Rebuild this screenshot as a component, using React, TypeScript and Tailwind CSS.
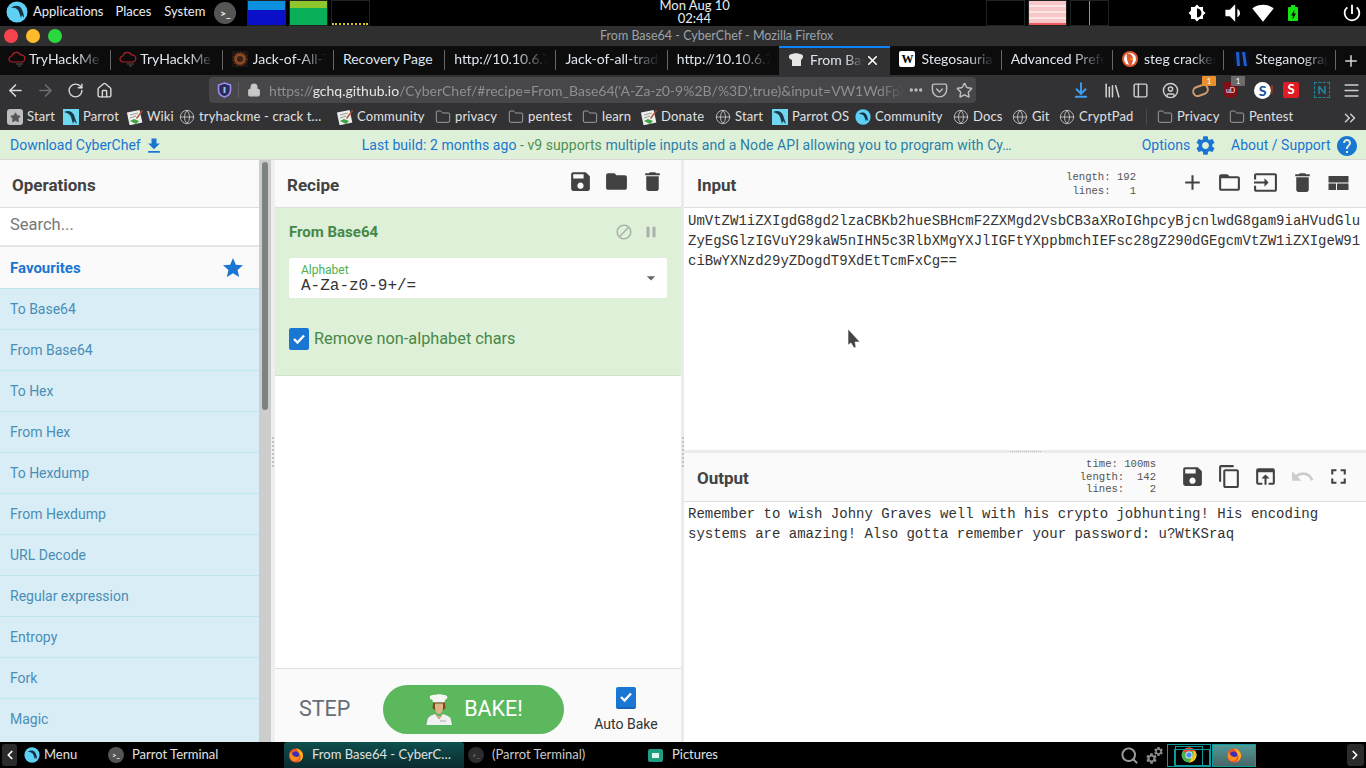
import React from 'react';
import {
  MdSave, MdFolder, MdDelete, MdAdd, MdFolderOpen, MdInput, MdContentCopy, MdOpenInBrowser,
  MdUndo, MdFullscreen, MdBlock, MdPause, MdStar, MdFileDownload, MdSettings, MdHelp,
  MdArrowDropDown, MdBrightnessMedium, MdVolumeDown, MdSignalWifi4Bar, MdPowerSettingsNew, MdBolt,
} from 'react-icons/md';
import {
  ArrowLeft, ArrowRight, RotateCw, Home, Lock, Star, MoreHorizontal, Pocket, ArrowDownToLine,
  Library, PanelLeft, CircleUser, Menu, Globe, Folder, ChevronsRight, Plus, X, ChevronLeft,
  ChevronRight, Search,
} from 'lucide-react';

const ui = "font-['Lato','Liberation_Sans',sans-serif]";

const ParrotLogo = ({ size = 16 }: { size?: number }) => (
  <svg width={size} height={size} viewBox="0 0 22 22" className="shrink-0">
    <circle cx="11" cy="11" r="10.5" fill="#5fd0f5" />
    <path d="M5 7c3-3 8-3 10 0 2 3 3 7 3 10l-2-3-1 3-2-6c-1-3-4-5-8-4z" fill="#16303f" />
  </svg>
);

const ParrotSquare = () => (
  <svg width="16" height="16" viewBox="0 0 16 16" className="shrink-0">
    <rect width="16" height="16" fill="#6fd8f0" />
    <path d="M1 3c4-2 8-1 10 3 1 3 2 6 3 9l-3-3-1 3-2-7C7 5 4 4 1 3z" fill="#1c3a4a" />
  </svg>
);

const WikiIcon = () => (
  <svg width="16" height="16" viewBox="0 0 16 16" className="shrink-0">
    <rect x="1" y="2" width="13" height="13" fill="#eee" transform="rotate(-12 8 8)" />
    <path d="M3 6l8-2M3 9l6-2" stroke="#999" strokeWidth="1" />
    <path d="M3 12l6 3 3-3-5-2z" fill="#3fa33f" />
    <path d="M9 9l6-8 1 1-6 8z" fill="#b5482a" />
  </svg>
);

const FirefoxIcon = ({ size = 16 }: { size?: number }) => (
  <svg width={size} height={size} viewBox="0 0 16 16" className="shrink-0">
    <circle cx="8" cy="8.5" r="7" fill="#f0562a" />
    <path d="M8 1.5c4 .5 7 3.5 7 7 0 1-.2 2-.6 3C13 14 10.5 15.5 8 15.5c3 0 5-3 4.5-6C12 6 10 4 8 1.5z" fill="#ffb01f" />
    <circle cx="7.5" cy="8" r="3.6" fill="#3b2fb5" />
    <path d="M3 5c1 3 3 5 6 5 1.5 0 2-1 2-2 1 3-1 6-4 6-3 0-5-2-5-5 0-1.5.3-3 1-4z" fill="#ff8a1f" />
  </svg>
);

const ChromeIcon = () => (
  <svg width="16" height="16" viewBox="0 0 16 16">
    <circle cx="8" cy="8" r="7.5" fill="#4caf50" />
    <path d="M8 .5a7.5 7.5 0 0 1 6.5 3.75H8A3.75 3.75 0 0 0 4.5 6.5L2 3A7.5 7.5 0 0 1 8 .5z" fill="#e5483b" />
    <path d="M14.5 4.25A7.5 7.5 0 0 1 8 15.5l3.25-5.5a3.75 3.75 0 0 0 0-5.75z" fill="#f9c21a" />
    <circle cx="8" cy="8" r="3.5" fill="#fff" />
    <circle cx="8" cy="8" r="2.7" fill="#4b8df5" />
  </svg>
);

const TermIcon = ({ dim = false }: { dim?: boolean }) => (
  <span className={`flex h-4 w-4 shrink-0 items-center justify-center rounded-full text-[7px] font-bold ${dim ? 'bg-[#2d2d2d] text-[#777]' : 'bg-[#555] text-white'}`}>
    &gt;_
  </span>
);

// chef on the bake button
const ChefIcon = () => (
  <svg width="26" height="31" viewBox="0 0 26 31" className="shrink-0">
    <path d="M5 1.5C7 0 10 1 11 .5c2-.5 5 0 7 .5 3 0 4 2 3 3.5L19 6l-.5 2.5H7L6.5 6 4.5 5C3.5 4 3.5 2 5 1.5z" fill="#f6f6f6" />
    <path d="M7 8.5h12v2c0 1 .5 2 .5 3.5l-2 2H8.500l-2-2c0-1.500.5-2.500.5-3.500z" fill="#7d4a20" />
    <path d="M9 9.5h8V14c0 3-2 6-4 6s-4-3-4-6z" fill="#dcb386" />
    <path d="M9 20l4 3 4-3 5 2 2.5 2L26 31H0l1.500-7L4 22z" fill="#f1f1f1" />
    <path d="M10 20l3 3.5L16 20l.5 1L13 25.500 9.500 21z" fill="#c99c6e" />
    <path d="M14 27h6" stroke="#a8a8a8" strokeWidth="1" />
    <path d="M0 31l1.500-7L4 22" fill="none" stroke="#6f8f6f" strokeWidth=".6" />
  </svg>
);

type Tab = { label: string; icon?: string; active?: boolean; full?: boolean };

const tabs: Tab[] = [
  { label: 'TryHackMe', icon: 'cloud' },
  { label: 'TryHackMe', icon: 'cloud' },
  { label: 'Jack-of-All-Trades', icon: 'gear' },
  { label: 'Recovery Page', full: true },
  { label: 'http://10.10.6.76' },
  { label: 'Jack-of-all-trades' },
  { label: 'http://10.10.6.76' },
  { label: 'From Base64', icon: 'chef', active: true },
  { label: 'Stegosauria', icon: 'wiki' },
  { label: 'Advanced Preferences' },
  { label: 'steg cracker', icon: 'duck' },
  { label: 'Steganography', icon: 'steg' },
];

const TabIcon = ({ kind }: { kind?: string }) => {
  if (kind === 'cloud')
    return (
      <svg width="18" height="16" viewBox="0 0 18 16" fill="none" stroke="#b3222a" strokeWidth="1.2" className="mr-[3px] -ml-[1px] shrink-0">
        <path d="M4 11a3 3 0 0 1 0-6 4.5 4.5 0 0 1 8.5-1A3.5 3.5 0 0 1 14 11z" />
        <path d="M8 13h7M10 15h3" stroke="#555" />
      </svg>
    );
  if (kind === 'gear')
    return (
      <svg width="16" height="16" viewBox="0 0 16 16" className="mr-[5px] shrink-0">
        <rect width="16" height="16" fill="#1c1410" />
        <circle cx="8" cy="8" r="6" fill="#8a4a25" />
        <circle cx="8" cy="8" r="3" fill="#3a2214" />
        <circle cx="8" cy="8" r="6.5" fill="none" stroke="#5c3018" strokeDasharray="1.5 1.5" strokeWidth="2" />
      </svg>
    );
  if (kind === 'chef')
    return (
      <svg width="16" height="16" viewBox="0 0 16 16" className="mr-[6px] shrink-0">
        <path d="M4 2c2-1 6-1 8 0 3 0 4 3 2 5l-1 1v6H4V8L2 7C0 5 1 2 4 2z" fill="#e6e6e6" />
      </svg>
    );
  if (kind === 'wiki')
    return (
      <span className="mr-[6px] flex h-4 w-4 shrink-0 items-center justify-center rounded-[2px] bg-white font-['Liberation_Serif',serif] text-[12px] font-bold text-black">W</span>
    );
  if (kind === 'duck')
    return (
      <svg width="16" height="16" viewBox="0 0 16 16" className="mr-[6px] shrink-0">
        <circle cx="8" cy="8" r="8" fill="#de5833" />
        <circle cx="8" cy="8" r="6" fill="#fff" />
        <path d="M5 3c3-1 6 1 6 5 0 3-1 5-2 6H7C6 11 4 7 5 3z" fill="#de5833" />
        <path d="M7 8l4-1v2z" fill="#e7b416" />
      </svg>
    );
  if (kind === 'steg')
    return (
      <svg width="16" height="16" viewBox="0 0 16 16" className="mr-[6px] shrink-0">
        <rect width="16" height="16" fill="#0b1020" />
        <path d="M3 1h3l1 14H4zM9 1h3l2 14h-3z" fill="#1f5fd0" />
      </svg>
    );
  return null;
};

const bookmarks = [
  { label: 'Start', icon: 'star', cls: 'w-[56px]' },
  { label: 'Parrot', icon: 'parrot', cls: 'w-[64px]' },
  { label: 'Wiki', icon: 'wiki', cls: 'w-[52px]' },
  { label: 'tryhackme - crack t…', icon: 'globe', cls: 'w-[158px]' },
  { label: 'Community', icon: 'wiki', cls: 'w-[98px]' },
  { label: 'privacy', icon: 'folder', cls: 'w-[73px]' },
  { label: 'pentest', icon: 'folder', cls: 'w-[74px]' },
  { label: 'learn', icon: 'folder', cls: 'w-[59px]' },
  { label: 'Donate', icon: 'wiki', cls: 'w-[74px]' },
  { label: 'Start', icon: 'globe', cls: 'w-[57px]' },
  { label: 'Parrot OS', icon: 'parrot', cls: 'w-[83px]' },
  { label: 'Community', icon: 'ball', cls: 'w-[98px]' },
  { label: 'Docs', icon: 'globe', cls: 'w-[59px]' },
  { label: 'Git', icon: 'globe', cls: 'w-[47px]' },
  { label: 'CryptPad', icon: 'globe', cls: 'w-[87px]' },
];

const endBookmarks = [
  { label: 'Privacy', icon: 'folder', cls: 'w-[72px]' },
  { label: 'Pentest', icon: 'folder', cls: 'w-[76px]' },
];

const BookmarkIcon = ({ kind }: { kind: string }) => {
  if (kind === 'star')
    return (
      <span className="flex h-4 w-4 shrink-0 items-center justify-center rounded-[3px] bg-[#bdbdbd]">
        <Star size={11} className="fill-[#555] text-[#555]" />
      </span>
    );
  if (kind === 'parrot') return <ParrotSquare />;
  if (kind === 'wiki') return <WikiIcon />;
  if (kind === 'ball') return <ParrotLogo />;
  if (kind === 'folder') return <Folder size={16} strokeWidth={1} className="shrink-0 text-[#d0d0d0]" />;
  return <Globe size={16} strokeWidth={1.3} className="shrink-0 text-[#c8c8c8]" />;
};

const operations = ['To Base64', 'From Base64', 'To Hex', 'From Hex', 'To Hexdump', 'From Hexdump', 'URL Decode', 'Regular expression', 'Entropy', 'Fork', 'Magic'];

const input = [
  'UmVtZW1iZXIgdG8gd2lzaCBKb2hueSBHcmF2ZXMgd2VsbCB3aXRoIGhpcyBjcnlwdG8gam9iaHVudGlu',
  'ZyEgSGlzIGVuY29kaW5nIHN5c3RlbXMgYXJlIGFtYXppbmchIEFsc28gZ290dGEgcmVtZW1iZXIgeW91',
  'ciBwYXNzd29yZDogdT9XdEtTcmFxCg==',
];

const Graph = ({ children }: { children?: React.ReactNode }) => (
  <div className="relative h-[26px] w-[39px] overflow-hidden border border-[#222] bg-black">{children}</div>
);

const TopBar = () => (
  <div className={`flex h-[26px] items-center bg-black pb-[3px] text-[13px] text-[#e8eef5] ${ui}`}>
    <div className="ml-[6px]"><ParrotLogo size={22} /></div>
    <span className="ml-[5px]">Applications</span>
    <span className="ml-[12px]">Places</span>
    <span className="ml-[13px]">System</span>
    <span className="ml-[9px] mt-[3px] flex h-[22px] w-[22px] items-center justify-center rounded-full bg-[#555] text-[10px] font-bold text-white">&gt;_</span>
    <div className="ml-[11px] flex gap-[3px] self-start">
      <Graph>
        <div className="absolute inset-x-0 top-0 h-[10px] bg-[#0d8fe0]" />
        <div className="absolute inset-x-0 bottom-0 h-[15px] bg-[#0a10c8]" />
      </Graph>
      <Graph>
        <div className="absolute inset-x-0 top-0 h-[8px] bg-[#8fc62e]" />
        <div className="absolute inset-x-0 bottom-0 h-[17px] bg-[#0aae58]" />
      </Graph>
      <Graph>
        <div className="absolute inset-x-0 bottom-0 h-[2px] w-[36px] border-b-2 border-dotted border-[#d6c51e]" />
      </Graph>
    </div>
    <div className="ml-[289px] w-[70px] whitespace-nowrap text-center text-[13px] leading-[13px]">
      <div>Mon Aug 10</div>
      <div>02:44</div>
    </div>
    <div className="ml-[257px] flex gap-[3px] self-start">
      <Graph />
      <Graph>
        <div className="absolute inset-0 bg-[repeating-linear-gradient(180deg,#f6c6c8_0px,#f6c6c8_4px,#fbe4e4_4px,#fbe4e4_6px)]" />
        <div className="absolute inset-x-0 bottom-0 h-[2px] bg-[#ee5a60]" />
      </Graph>
      <Graph>
        <div className="absolute inset-y-0 left-[18px] w-px bg-[#e87a20]" />
      </Graph>
    </div>
    <MdBrightnessMedium size={18} className="ml-[79px] mt-[3px] text-white" />
    <MdVolumeDown size={26} className="ml-[14px] mt-[3px] text-white" />
    <MdSignalWifi4Bar size={22} className="ml-[6px] mt-[3px] text-white" />
    <span className="relative ml-[14px] mt-[5px] flex h-[14px] w-[10px] items-center justify-center rounded-[1px] bg-[#14e314]">
      <span className="absolute -top-[2px] left-[3px] h-[2px] w-[4px] bg-[#14e314]" />
      <MdBolt size={11} className="shrink-0 text-black" />
    </span>
    <MdPowerSettingsNew size={22} className="ml-[43px] mt-[3px] text-white" />
  </div>
);

const TitleBar = () => (
  <div className={`flex h-[20px] items-center bg-[#2f2f2f] ${ui}`}>
    <div className="ml-[4px] flex gap-[8px]">
      <span className="h-[14px] w-[14px] rounded-full bg-[#f8444f]" />
      <span className="h-[14px] w-[14px] rounded-full bg-[#fdbb2d]" />
      <span className="h-[14px] w-[14px] rounded-full bg-[#2bd93f]" />
    </div>
    <div className="ml-[538px] text-[12.5px] text-[#9aa2aa]">From Base64 - CyberChef - Mozilla Firefox</div>
  </div>
);

const TabBar = () => (
  <div className={`flex h-[29px] items-stretch bg-[#0c0c0d] text-[14px] text-[#dfe6ee] ${ui}`}>
    {tabs.map((tab, i) => (
      <div
        key={i}
        className={`relative flex w-[111.3px] items-center pb-[4px] pl-[9px] ${tab.active ? 'border-t-2 border-[#0a84ff] bg-[#323234] pr-[26px]' : 'pr-[8px]'}`}
      >
        <TabIcon kind={tab.icon} />
        <span className={`min-w-0 flex-1 overflow-hidden whitespace-nowrap ${tab.full ? '' : '[mask-image:linear-gradient(90deg,#000_65%,transparent_100%)]'}`}>{tab.label}</span>
        {tab.active && <X size={15} strokeWidth={2.5} className="absolute right-[10px] top-[5px] shrink-0 text-white" />}
        {!tab.active && i !== 6 && <span className="absolute right-0 top-[4px] h-[20px] w-px bg-[#666]" />}
      </div>
    ))}
    <Plus size={18} className="ml-[6px] self-center text-[#d6d6d6]" />
  </div>
);

const NavBar = () => (
  <div className={`flex h-[30px] items-center bg-[#323234] ${ui}`}>
    <ArrowLeft size={19} className="ml-[6px] text-[#d8d8d8]" />
    <ArrowRight size={19} className="ml-[11px] text-[#6f6f6f]" />
    <RotateCw size={17} className="ml-[12px] text-[#d8d8d8]" />
    <Home size={17} className="ml-[12px] text-[#d8d8d8]" />
    <div className="ml-[96px] flex h-[26px] w-[767px] items-center rounded-[4px] bg-[#474749] text-[14px]">
      <svg width="15" height="16" viewBox="0 0 15 16" className="ml-[8px] shrink-0">
        <path d="M7.5 1l6 2v5c0 3.5-2.5 6-6 7-3.5-1-6-3.5-6-7V3z" fill="#2b2b55" stroke="#9d8cf2" strokeWidth="1.6" />
        <rect x="6.5" y="5" width="2" height="6" fill="#8fc0f5" />
      </svg>
      <span className="ml-[6px] h-[16px] w-px bg-[#5f5f5f]" />
      <Lock size={14} className="ml-[8px] shrink-0 fill-[#c8c8c8] text-[#c8c8c8]" />
      <div className="ml-[8px] w-[636px] overflow-hidden whitespace-nowrap text-[#8f8f91] [mask-image:linear-gradient(90deg,#000_96%,transparent_100%)]">
        https://<span className="text-[#e6e6e6]">gchq.github.io</span>/CyberChef/#recipe=From_Base64('A-Za-z0-9%2B/%3D',true)&amp;input=VW1WdFpXMWlaWElnZEc4Z2Qyb
      </div>
      <MoreHorizontal size={16} strokeWidth={3} className="ml-[3px] text-[#c0c0c0]" />
      <Pocket size={17} className="ml-[7px] text-[#c0c0c0]" />
      <Star size={17} className="ml-[8px] text-[#c0c0c0]" />
    </div>
    <ArrowDownToLine size={18} strokeWidth={2.5} className="ml-[96px] text-[#3f9ff2]" />
    <Library size={19} className="ml-[13px] text-[#cfcfcf]" />
    <PanelLeft size={17} className="ml-[10px] text-[#cfcfcf]" />
    <CircleUser size={17} className="ml-[13px] text-[#cfcfcf]" />
    <span className="relative ml-[13px] h-[16px] w-[17px]">
      <span className="absolute left-0 top-[3px] h-[11px] w-[17px] -rotate-[20deg] rounded-[6px] border-2 border-[#cf9a70] bg-[#333]" />
      <span className="absolute -right-[7px] -top-[6px] h-[10px] w-[14px] rounded-[1px] bg-[#e8912d] text-center text-[8px] leading-[10px] text-white">1</span>
    </span>
    <span className="relative ml-[14px] flex h-[16px] w-[15px] items-center justify-center rounded-b-[7px] bg-[#800f16] text-[7px] text-white">
      uD
      <span className="absolute -right-[7px] -top-[6px] h-[10px] w-[14px] rounded-[1px] bg-[#6b6b6b] text-center text-[8px] leading-[10px] text-white">1</span>
    </span>
    <span className="relative ml-[16px] flex h-[17px] w-[17px] items-center justify-center rounded-full bg-white text-[14px] font-bold text-[#0c4da2]">
      S
      <span className="absolute -right-[2px] top-0 text-[11px] leading-[14px] text-[#e01b24]">!</span>
    </span>
    <span className="ml-[12px] flex h-[16px] w-[16px] items-center justify-center rounded-[2px] bg-[#e01b24] text-[13px] font-bold text-white">S</span>
    <span className="ml-[15px] flex h-[16px] w-[16px] items-center justify-center border border-dashed border-[#1d8a9a] text-[12px] font-bold text-[#1d8a9a]">N</span>
    <Menu size={19} className="ml-[12px] text-[#d0d0d0]" />
  </div>
);

const BookmarkBar = () => (
  <div className={`relative flex h-[25px] items-center bg-[#323234] pb-[1px] pl-[7px] text-[13px] tracking-[0.15px] text-[#e0e0e0] ${ui}`}>
    {bookmarks.map((b, i) => (
      <div key={i} className={`flex items-center gap-[4px] whitespace-nowrap ${b.cls}`}>
        <BookmarkIcon kind={b.icon} />
        <span>{b.label}</span>
      </div>
    ))}
    <span className="h-[16px] w-px bg-[#4a4a4a]" />
    <div className="w-[10px]" />
    {endBookmarks.map((b) => (
      <div key={b.label} className={`flex items-center gap-[4px] whitespace-nowrap ${b.cls}`}>
        <BookmarkIcon kind={b.icon} />
        <span>{b.label}</span>
      </div>
    ))}
    <ChevronsRight size={18} className="absolute right-[7px] top-[4px] text-[#cfcfcf]" />
  </div>
);

const Banner = () => (
  <div className="flex h-[30px] items-center border-b border-[#d8d8d8] bg-[#dff0d8] pl-[10px] pt-[2px] text-[14px] text-[#1976d2]">
    <span>Download CyberChef</span>
    <MdFileDownload size={20} className="ml-[3px]" />
    <div className="ml-[198px] w-[675px] whitespace-nowrap tracking-[0.06px]">
      Last build: 2 months ago <span className="text-[#4f8f52]">- v9 supports</span> <span className="text-[#2a80a8]">multiple inputs and a Node API allowing you to program with Cy…</span>
    </div>
    <span className="ml-[105px]">Options</span>
    <MdSettings size={23} className="ml-[4px]" />
    <span className="ml-[14px]">About / Support</span>
    <MdHelp size={24} className="ml-[4px]" />
  </div>
);

const Operations = () => (
  <div className="flex w-[259px] shrink-0 flex-col overflow-hidden bg-[#d9edf7]">
    <div className="flex h-[48px] shrink-0 items-center border-b border-[#dedede] bg-[#fafafa] pl-[12px] pt-[5px] text-[17px] font-bold text-[#424242]">Operations</div>
    <div className="flex h-[39px] shrink-0 items-center border-b-2 border-[#e4e4e4] bg-white pb-[3px] pl-[10px] text-[16.5px] text-[#777]">Search...</div>
    <div className="flex h-[41px] shrink-0 items-center justify-between bg-[#fafafa] pl-[10px] pr-[14px] pt-[1px] text-[15px] font-bold text-[#1976d2]">
      <span>Favourites</span>
      <MdStar size={24} />
    </div>
    {operations.map((op) => (
      <div key={op} className="flex h-[41px] shrink-0 items-center border-t border-[#bce8f1] pl-[10px] text-[14px] text-[#4a8db5] first:border-t-0">
        {op}
      </div>
    ))}
  </div>
);

// the 8 little grey squares on a drag handle
const GripDots = () => (
  <div className="flex flex-col gap-[2px]">
    {[0, 1, 2, 3, 4, 5, 6, 7].map((d) => (
      <span key={d} className="h-[2px] w-[2px] bg-[#c4c4c4]" />
    ))}
  </div>
);

const Scrollbar = () => (
  <div className="flex w-[16px] shrink-0">
    <div className="w-[12px] bg-[#cdcdcd] pl-[3px] pt-[2px]">
      <div className="h-[248px] w-[6px] rounded-[3px] bg-[#7d8283]" />
    </div>
    <div className="flex w-[4px] items-center justify-center bg-[#efefef] pt-[1px]">
      <GripDots />
    </div>
  </div>
);

const Recipe = () => (
  <div className="flex w-[406px] shrink-0 flex-col bg-white">
    <div className="flex h-[48px] shrink-0 items-center border-b border-[#dedede] bg-[#fafafa] pl-[12px] pr-[16px]">
      <span className="pt-[5px] text-[17px] font-bold text-[#424242]">Recipe</span>
      <div className="ml-auto flex -translate-y-[2px] gap-[11px] text-[#424242]">
        <MdSave size={25} />
        <MdFolder size={25} />
        <MdDelete size={25} />
      </div>
    </div>
    <div className="h-[168px] shrink-0 border-b border-[#cfe3c6] bg-[#dff0d8] px-[14px]">
      <div className="flex h-[48px] items-center justify-between pr-[7px]">
        <span className="text-[15px] font-bold text-[#468847]">From Base64</span>
        <div className="flex items-center gap-[9px] text-[#a9b1a9]">
          <MdBlock size={18} />
          <MdPause size={18} />
        </div>
      </div>
      <div className="relative mt-[2px] h-[40px] w-[378px] rounded-[2px] bg-white pl-[12px] pt-[5px]">
        <div className="text-[12px] leading-[14px] text-[#4caf50]">Alphabet</div>
        <div className="font-['Liberation_Mono',monospace] text-[16px] leading-[18px] text-[#333]">A-Za-z0-9+/=</div>
        <MdArrowDropDown size={20} className="absolute right-[6px] top-[10px] text-[#666]" />
      </div>
      <label className="mt-[29px] flex items-center gap-[5px] text-[16.3px] text-[#468847]">
        <span className="flex h-[22px] w-[20px] items-center justify-center rounded-[2px] bg-[#1976d2]">
          <svg width="14" height="12" viewBox="0 0 14 12"><path d="M2 6l3.5 3.5L12 2.5" fill="none" stroke="#fff" strokeWidth="2.4" /></svg>
        </span>
        Remove non-alphabet chars
      </label>
    </div>
    <div className="flex-1" />
    <div className="flex h-[74px] shrink-0 items-center border-t border-[#dedede] bg-[#fafafa] pl-[24px] pt-[7px]">
      <span className="w-[84px] text-[21.5px] text-[#666e75]">STEP</span>
      <div className="flex h-[49px] w-[181px] items-center justify-center gap-[12px] rounded-full bg-[#5cb85c] pl-[2px] text-[21.5px] text-white">
        <ChefIcon />
        <span>BAKE!</span>
      </div>
      <div className="ml-[30px] mt-[3px] flex w-[64px] flex-col items-center text-[14px] text-[#333]">
        <span className="flex h-[22px] w-[20px] items-center justify-center rounded-[2px] border-b-2 border-[#1565b8] bg-[#1976d2]">
          <svg width="14" height="12" viewBox="0 0 14 12"><path d="M2 6l3.5 3.5L12 2.5" fill="none" stroke="#fff" strokeWidth="2.4" /></svg>
        </span>
        <span className="mt-[5px] whitespace-nowrap">Auto Bake</span>
      </div>
    </div>
  </div>
);

const Stat = ({ lines, tall = false }: { lines: string[]; tall?: boolean }) => (
  <div className={`whitespace-pre text-right font-['Liberation_Mono',monospace] text-[10.6px] text-[#555] ${tall ? 'leading-[14px]' : 'leading-[12.5px]'}`}>
    {lines.map((l) => <div key={l}>{l}</div>)}
  </div>
);

const IO = () => (
  <div className="flex min-w-0 flex-1">
    <div className="flex w-[3px] shrink-0 flex-col items-center justify-center bg-[#ebebeb] pl-[1px] pt-[1px]">
      <GripDots />
    </div>
    <div className="flex min-w-0 flex-1 flex-col bg-white">
      <div className="flex h-[48px] shrink-0 items-center border-b border-[#dedede] bg-[#fafafa] pl-[13px] pr-[15px]">
        <span className="pt-[5px] text-[17px] font-bold text-[#424242]">Input</span>
        <div className="ml-auto mr-[44px]">
          <Stat tall lines={['length: 192', ' lines:   1']} />
        </div>
        <div className="flex -translate-y-[1px] gap-[11.5px] text-[#424242]">
          <MdAdd size={25} />
          <MdFolderOpen size={25} />
          <MdInput size={25} />
          <MdDelete size={25} />
          <svg width="25" height="25" viewBox="0 0 25 25">
            <path d="M2.5 6h20v6.5h-20zM2.5 13.5H10V20H2.500zM11 13.5h11.5V20H11z" fill="currentColor" />
          </svg>
        </div>
      </div>
      <div className="relative h-[242px] shrink-0 pl-[4px] pt-[3px] font-['Liberation_Mono',monospace] text-[14px] leading-[20px] text-[#333]">
        {input.map((l) => <div key={l}>{l}</div>)}
        <svg width="14" height="21" viewBox="0 0 14 21" className="absolute left-[163px] top-[120px]">
          <path d="M1 1v16l3-2 3 5 2-1-1-5h5z" fill="#444" stroke="#fff" strokeWidth=".6" />
        </svg>
      </div>
      <div className="flex h-[3px] shrink-0 items-center justify-center bg-[#ebebeb]">
        <span className="w-[31px] border-t border-dotted border-[#bbb]" />
      </div>
      <div className="flex h-[49px] shrink-0 items-center border-b border-[#dedede] bg-[#fafafa] pl-[13px] pr-[15px]">
        <span className="pt-[4px] text-[17px] font-bold text-[#424242]">Output</span>
        <div className="ml-auto mr-[24px]">
          <Stat lines={[' time: 100ms', 'length:  142', ' lines:    2']} />
        </div>
        <div className="flex -translate-y-[1px] gap-[11.5px] text-[#424242]">
          <MdSave size={25} />
          <MdContentCopy size={25} />
          <MdOpenInBrowser size={25} />
          <MdUndo size={25} className="text-[#ccc]" />
          <MdFullscreen size={25} />
        </div>
      </div>
      <div className="flex-1 pl-[4px] pt-[2px] font-['Liberation_Mono',monospace] text-[14px] leading-[20px] text-[#333]">
        <div>Remember to wish Johny Graves well with his crypto jobhunting! His encoding</div>
        <div>systems are amazing! Also gotta remember your password: u?WtKSraq</div>
      </div>
    </div>
  </div>
);

const TaskBar = () => (
  <div className={`flex h-[26px] items-center bg-black text-[13px] text-[#e0e0e0] ${ui}`}>
    <span className="ml-[2px] flex h-[22px] w-[15px] items-center justify-center rounded-[3px] bg-[#2b2b2b]">
      <ChevronLeft size={14} strokeWidth={3} className="text-white" />
    </span>
    <div className="ml-[7px]"><ParrotLogo /></div>
    <span className="ml-[4px] w-[64px]">Menu</span>
    <TermIcon />
    <span className="ml-[8px] w-[152px]">Parrot Terminal</span>
    <div className="flex h-[26px] w-[180px] items-center rounded-t-[3px] bg-[linear-gradient(180deg,#0e4f4f,#0a2b2e)] pl-[4px]">
      <FirefoxIcon />
      <span className="ml-[8px]">From Base64 - CyberC…</span>
    </div>
    <div className="ml-[4px]"><TermIcon dim /></div>
    <span className="ml-[8px] w-[156px] text-[#c8c8c8]">(Parrot Terminal)</span>
    <span className="flex h-[13px] w-[15px] items-center justify-center rounded-[2px] bg-[#1f9d82]">
      <span className="h-[5px] w-[7px] bg-[#dff5ef]" />
    </span>
    <span className="ml-[9px]">Pictures</span>
    <Search size={19} strokeWidth={2.5} className="ml-[402px] text-[#9a9a9a]" />
    <div className="relative ml-[6px] h-[19px] w-[19px] text-[#8a8a8a]">
      <MdSettings size={13} className="absolute bottom-0 left-0" />
      <MdSettings size={11} className="absolute right-0 top-0" />
    </div>
    <div className="relative ml-[3px] flex h-[23px] w-[44px] items-center justify-center border border-[#0c9a9a]">
      <ChromeIcon />
      <span className="absolute left-[7px] top-[1px] h-[20px] w-[28px] border border-[#0c9a9a]" />
      <span className="absolute bottom-0 left-[6px] right-0 top-[4px] border border-[#0c9a9a]" />
    </div>
    <div className="ml-[1px] flex h-[23px] w-[44px] items-center justify-center border border-[#0c9a9a] bg-[linear-gradient(180deg,#4f9a98,#4a6666)]">
      <FirefoxIcon />
    </div>
    <span className="ml-[91px] flex h-[22px] w-[17px] items-center justify-center rounded-[3px] bg-[#2b2b2b]">
      <ChevronRight size={14} strokeWidth={3} className="text-white" />
    </span>
  </div>
);

export default function App() {
  return (
    <div className="flex h-[768px] w-[1366px] flex-col overflow-hidden font-['Roboto',sans-serif]">
      <TopBar />
      <TitleBar />
      <TabBar />
      <NavBar />
      <BookmarkBar />
      <Banner />
      <div className="flex min-h-0 flex-1">
        <Operations />
        <Scrollbar />
        <Recipe />
        <IO />
      </div>
      <TaskBar />
    </div>
  );
}
